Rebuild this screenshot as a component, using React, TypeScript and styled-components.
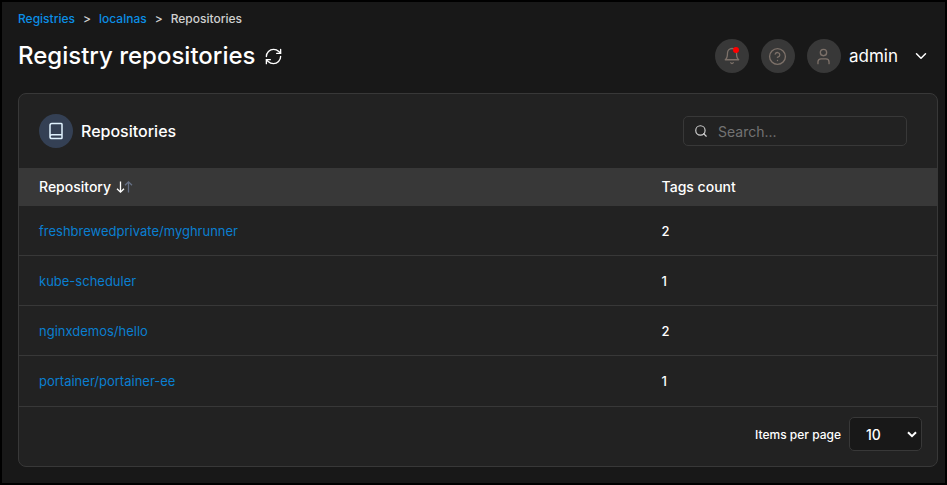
import React from "react";
import styled, { createGlobalStyle } from "styled-components";
import { Book, ChevronDown, CircleHelp, RefreshCw, Search, User } from "lucide-react";

const GlobalStyle = createGlobalStyle`
  *, *::before, *::after { box-sizing: border-box; }
  body {
    margin: 0;
    background: #181818;
    color: #ffffff;
    font-family: Inter, "Liberation Sans", sans-serif;
    font-size: 14px;
  }
  button, input, select { font: inherit; color: inherit; }
  button { cursor: pointer; }
`;

const Page = styled.main`
  min-height: 100vh;
  padding: 8px 7px 16px 16px;
  border: 2px solid #000000;
`;

const Breadcrumbs = styled.nav`
  display: flex;
  gap: 8px;
  font-size: 12px;
  line-height: 18px;
  font-weight: 500;
  color: #d0d0d0;
`;

const Crumb = styled.a`
  color: #0b8fe6;
  text-decoration: none;
`;

const TitleBar = styled.header`
  display: flex;
  align-items: center;
  justify-content: space-between;
  height: 56px;
`;

const TitleGroup = styled.div`
  display: flex;
  align-items: center;
  gap: 8px;
`;

const Title = styled.h1`
  margin: 0;
  font-size: 24px;
  line-height: 32px;
  font-weight: 500;
`;

const PlainButton = styled.button`
  display: flex;
  align-items: center;
  padding: 0;
  border: 0;
  background: none;
`;

const Actions = styled.div`
  display: flex;
  align-items: center;
  gap: 12px;
  padding-right: 8px;
`;

const Round = styled.span<{ $tone?: "blue" }>`
  position: relative;
  display: flex;
  align-items: center;
  justify-content: center;
  width: 34px;
  height: 34px;
  border-radius: 50%;
  background: ${(p) => (p.$tone === "blue" ? "#344054" : "#383838")};
  color: ${(p) => (p.$tone === "blue" ? "#e0f2fe" : "#7d7169")};
`;

const Dot = styled.span`
  position: absolute;
  top: 8px;
  right: 10px;
  width: 6px;
  height: 6px;
  border-radius: 50%;
  background: #ff0000;
`;

const UserButton = styled(PlainButton)`
  gap: 8px;
  font-size: 17px;
  line-height: 24px;
`;

const UserName = styled.span`
  margin-right: 6px;
`;

const Card = styled.section`
  margin-top: 9px;
  border: 1px solid #383838;
  border-radius: 8px;
  background: #222222;
`;

const CardHeader = styled.div`
  display: flex;
  align-items: center;
  justify-content: space-between;
  height: 74px;
  padding: 0 30px 0 20px;
`;

const CardTitle = styled.h2`
  margin: 0;
  font-size: 16px;
  line-height: 24px;
  font-weight: 500;
`;

const SearchBox = styled.label`
  display: flex;
  align-items: center;
  gap: 10px;
  width: 224px;
  height: 30px;
  padding: 0 10px;
  border: 1px solid #383838;
  border-radius: 5px;
  color: #d0d0d0;
`;

const SearchInput = styled.input`
  flex: 1;
  min-width: 0;
  padding: 0;
  border: 0;
  outline: 0;
  background: none;
  &::placeholder { color: #737373; opacity: 1; }
`;

const Table = styled.table`
  width: 100%;
  table-layout: fixed;
  border-collapse: separate;
  border-spacing: 0;
`;

const HeadCell = styled.th<{ $wide?: boolean }>`
  width: ${(p) => (p.$wide ? "70%" : "auto")};
  height: 38px;
  padding: 0 0 1px ${(p) => (p.$wide ? "20px" : "0")};
  background: #383838;
  font-weight: 500;
  text-align: left;
`;

const SortButton = styled(PlainButton)`
  gap: 5px;
  font-weight: 500;
`;

const Cell = styled.td<{ $first?: boolean }>`
  height: 50px;
  padding: 0 0 0 ${(p) => (p.$first ? "20px" : "0")};
  border-bottom: 1px solid #383838;
  font-size: 13px;
  font-weight: ${(p) => (p.$first ? 400 : 500)};

  tr:last-child > & {
    border-bottom-color: transparent;
  }
`;

const RepoLink = styled.a`
  color: #0a7fd0;
  text-decoration: none;
`;

const CardFooter = styled.div`
  display: flex;
  justify-content: flex-end;
  padding: 10px 15px 15px;
  border-top: 1px solid #383838;
`;

const PageSize = styled.label`
  display: flex;
  align-items: center;
  gap: 8px;
  font-size: 12px;
  font-weight: 500;
`;

const SelectWrap = styled.span`
  position: relative;
  display: flex;
`;

const Select = styled.select`
  appearance: none;
  width: 73px;
  height: 34px;
  padding: 0 16px;
  border: 1px solid #383838;
  border-radius: 5px;
  background: #181818;
  font-size: 14px;
`;

const SelectArrow = styled.svg`
  position: absolute;
  right: 5px;
  top: 14px;
  pointer-events: none;
`;

const repositories = [
  { name: "freshbrewedprivate/myghrunner", tags: 2 },
  { name: "kube-scheduler", tags: 1 },
  { name: "nginxdemos/hello", tags: 2 },
  { name: "portainer/portainer-ee", tags: 1 },
];

function BellIcon() {
  return (
    <svg
      width="18"
      height="18"
      viewBox="0 0 24 24"
      fill="none"
      stroke="currentColor"
      strokeWidth="1.7"
      strokeLinecap="round"
      strokeLinejoin="round"
      aria-hidden="true"
    >
      <path d="M6 8a6 6 0 0 1 12 0c0 7 3 9 3 9H3s3-2 3-9" />
      <path d="M10.3 21a1.94 1.94 0 0 0 3.4 0" />
    </svg>
  );
}

function SortArrows() {
  return (
    <svg width="17" height="14" viewBox="0 0 17 14" fill="none" strokeWidth="1.3" aria-hidden="true">
      <path d="M4.5 1.5v10.5M1 8.7l3.5 3.5L8 8.7" stroke="#ffffff" />
      <path d="M12.5 12.5V2M9 5.3l3.5-3.5L16 5.3" stroke="#667085" />
    </svg>
  );
}

export default function App() {
  return (
    <>
      <GlobalStyle />
      <Page>
        <Breadcrumbs aria-label="Breadcrumb">
          <Crumb href="#registries">Registries</Crumb>
          <span>&gt;</span>
          <Crumb href="#localnas">localnas</Crumb>
          <span>&gt;</span>
          <span>Repositories</span>
        </Breadcrumbs>
        <TitleBar>
          <TitleGroup>
            <Title>Registry repositories</Title>
            <PlainButton type="button" aria-label="Refresh">
              <RefreshCw size={19} strokeWidth={1.7} />
            </PlainButton>
          </TitleGroup>
          <Actions>
            <PlainButton type="button" aria-label="Notifications">
              <Round>
                <BellIcon />
                <Dot />
              </Round>
            </PlainButton>
            <PlainButton type="button" aria-label="Help">
              <Round>
                <CircleHelp size={19} strokeWidth={1.7} />
              </Round>
            </PlainButton>
            <UserButton type="button">
              <Round>
                <User size={19} strokeWidth={1.7} />
              </Round>
              <UserName>admin</UserName>
              <ChevronDown size={18} strokeWidth={2} />
            </UserButton>
          </Actions>
        </TitleBar>
        <Card>
          <CardHeader>
            <TitleGroup>
              <Round $tone="blue">
                <Book size={18} strokeWidth={2} />
              </Round>
              <CardTitle>Repositories</CardTitle>
            </TitleGroup>
            <SearchBox>
              <Search size={14} strokeWidth={2} />
              <SearchInput type="text" placeholder="Search..." aria-label="Search" />
            </SearchBox>
          </CardHeader>
          <Table>
            <thead>
              <tr>
                <HeadCell $wide>
                  <SortButton type="button">
                    Repository
                    <SortArrows />
                  </SortButton>
                </HeadCell>
                <HeadCell>Tags count</HeadCell>
              </tr>
            </thead>
            <tbody>
              {repositories.map((repo) => (
                <tr key={repo.name}>
                  <Cell $first>
                    <RepoLink href={`#${repo.name}`}>{repo.name}</RepoLink>
                  </Cell>
                  <Cell>{repo.tags}</Cell>
                </tr>
              ))}
            </tbody>
          </Table>
          <CardFooter>
            <PageSize>
              Items per page
              <SelectWrap>
                <Select defaultValue="10">
                  <option>10</option>
                  <option>25</option>
                  <option>50</option>
                  <option>100</option>
                </Select>
                <SelectArrow width="10" height="7" viewBox="0 0 10 7" fill="none" aria-hidden="true">
                  <path d="M1 1.2l4 4 4-4" stroke="#ffffff" strokeWidth="2" />
                </SelectArrow>
              </SelectWrap>
            </PageSize>
          </CardFooter>
        </Card>
      </Page>
    </>
  );
}
